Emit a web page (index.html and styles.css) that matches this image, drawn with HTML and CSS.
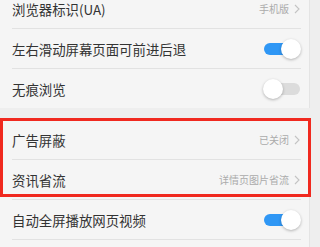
FILE: index.html
```html
<!DOCTYPE html>
<html lang="zh">
<head>
<meta charset="utf-8">
<link rel="stylesheet" href="styles.css">
</head>
<body>
<div class="page">
  <div class="card">
    <div class="row">
      <span class="label">浏览器标识(UA)</span>
      <span class="value">手机版<svg class="chev" width="6" height="10" viewBox="0 0 6 10"><polyline points="1,1 5,5 1,9" fill="none" stroke="#c4c4c4" stroke-width="1.1"/></svg></span>
    </div>
    <div class="row">
      <span class="label">左右滑动屏幕页面可前进后退</span>
      <span class="toggle on"><span class="knob"></span></span>
    </div>
    <div class="row">
      <span class="label">无痕浏览</span>
      <span class="toggle"><span class="knob"></span></span>
    </div>
  </div>
  <div class="card card-2">
    <div class="mark"></div>
    <div class="row">
      <span class="label">广告屏蔽</span>
      <span class="value">已关闭<svg class="chev" width="6" height="10" viewBox="0 0 6 10"><polyline points="1,1 5,5 1,9" fill="none" stroke="#c4c4c4" stroke-width="1.1"/></svg></span>
    </div>
    <div class="row">
      <span class="label">资讯省流</span>
      <span class="value">详情页图片省流<svg class="chev" width="6" height="10" viewBox="0 0 6 10"><polyline points="1,1 5,5 1,9" fill="none" stroke="#c4c4c4" stroke-width="1.1"/></svg></span>
    </div>
    <div class="row">
      <span class="label">自动全屏播放网页视频</span>
      <span class="toggle on"><span class="knob"></span></span>
    </div>
    <div class="row">
      <span class="label"></span>
    </div>
  </div>
</div>
</body>
</html>
```

FILE: styles.css
```css
html, body {
  margin: 0;
  padding: 0;
}
body {
  background: #eeeeee;
  font-family: "Noto Sans CJK SC", "Noto Sans", sans-serif;
  overflow: hidden;
}
.page {
  margin-top: -11px;
  width: 310px;
}
.card {
  background: #f5f5f5;
  border-right: 1px solid #e4e4e4;
}
.card-2 {
  margin-top: 12px;
  position: relative;
}
.row {
  height: 39px;
  margin: 0 8px 0 12px;
  border-bottom: 1px solid #e2e2e2;
  display: flex;
  align-items: center;
  justify-content: space-between;
}
.card > .row:last-child {
  border-bottom: none;
}
.label {
  font-size: 13.4px;
  color: #333333;
  white-space: nowrap;
}
.value {
  display: flex;
  align-items: center;
  gap: 5px;
  font-size: 10px;
  color: #ababab;
  margin-right: 1px;
}
.chev {
  display: block;
}
.toggle {
  width: 36px;
  height: 12px;
  border-radius: 6px;
  background: #dcdcdc;
  position: relative;
  margin-right: 1px;
}
.toggle.on {
  background: #2f97f5;
}
.knob {
  position: absolute;
  top: -4px;
  left: -1px;
  width: 20px;
  height: 20px;
  border-radius: 50%;
  background: #ffffff;
  box-shadow: 0 1px 3px rgba(0, 0, 0, 0.28);
}
.toggle.on .knob {
  left: 17px;
}
.mark {
  position: absolute;
  left: 0;
  top: -2px;
  width: 311px;
  height: 79px;
  box-sizing: border-box;
  border: 3px solid #f0291f;
  pointer-events: none;
  z-index: 2;
}
```
